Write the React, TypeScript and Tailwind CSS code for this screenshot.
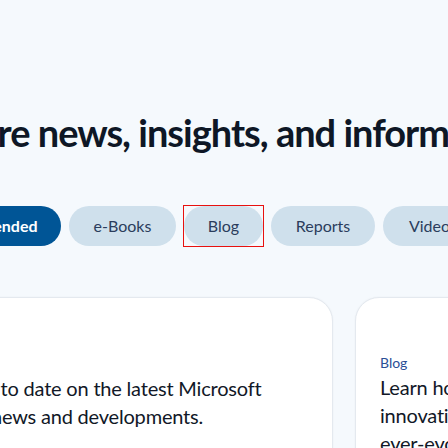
import React from "react";

const tabs = [
  { label: "Recommended", w: "w-[153px]", active: true },
  { label: "e-Books", w: "w-[107px]" },
  { label: "Blog", w: "w-[79px]", focus: true },
  { label: "Reports", w: "w-[104px]" },
  { label: "Videos", w: "w-[100px]" },
];

export default function App() {
  return (
    <div className="w-[448px] h-[448px] overflow-hidden bg-[#f5f9fd] font-['Lato',sans-serif]">
      <div className="-ml-[92px] w-[1000px] pt-[108px]">
        <h2 className="text-[38px] leading-[48px] font-bold tracking-[-1px] text-[#0e1726] whitespace-nowrap">
          Explore news, insights, and information
        </h2>

        <div className="flex items-center gap-2 mt-[49px]">
          {tabs.map((t) => {
            const pill = (
              <div
                className={
                  "h-10 rounded-full flex items-center justify-center text-base shrink-0 " +
                  t.w +
                  (t.active
                    ? " bg-[#005596] text-white font-bold"
                    : " bg-[#cfe0ec] text-[#2b3d5c]")
                }
              >
                {t.label}
              </div>
            );
            return t.focus ? (
              <div key={t.label} className="border border-[#e8110f] -mx-px">
                {pill}
              </div>
            ) : (
              <React.Fragment key={t.label}>{pill}</React.Fragment>
            );
          })}
        </div>

        <div className="flex gap-[22px] mt-[50px]">
          <div className="w-[425px] h-[200px] bg-white rounded-3xl border border-[#e4e9ef] shadow-[0_0_2px_rgba(0,0,0,0.05)] shrink-0">
            <div className="w-[500px] -ml-[62px] pt-[76px] text-center text-[20px] leading-[28px] tracking-[-0.2px] text-[#111827] whitespace-nowrap">
              Stay up to date on the latest Microsoft
              <br />
              news and developments.
            </div>
          </div>
          <div className="w-[320px] h-[200px] bg-white rounded-3xl border border-[#e4e9ef] shadow-[0_0_2px_rgba(0,0,0,0.05)] shrink-0 px-6 pt-[55px]">
            <div className="text-sm leading-5 text-[#2a4f96]">Blog</div>
            <div className="text-[20px] leading-[28px] tracking-[-0.2px] text-[#111827] whitespace-nowrap">
              Learn how AI-powered
              <br />
              innovation is shaping
              <br />
              ever-evolving industries.
            </div>
          </div>
        </div>
      </div>
    </div>
  );
}
